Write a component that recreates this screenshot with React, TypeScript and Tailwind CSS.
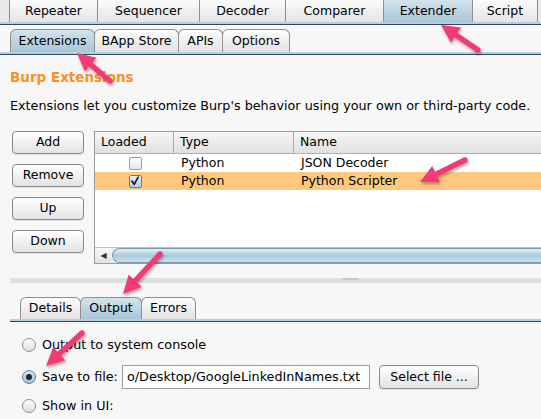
import React from "react";

function Arrow({ x1, y1, x2, y2 }: { x1: number; y1: number; x2: number; y2: number }) {
  const dx = x2 - x1;
  const dy = y2 - y1;
  const L = Math.hypot(dx, dy);
  const ux = dx / L;
  const uy = dy / L;
  const px = -uy;
  const py = ux;
  const hl = 18;
  const hw = 9;
  const sw = 2.7;
  const bx = x2 - ux * hl;
  const by = y2 - uy * hl;
  const pts = [
    [x1 + px * sw, y1 + py * sw],
    [bx + px * sw, by + py * sw],
    [bx + px * hw, by + py * hw],
    [x2, y2],
    [bx - px * hw, by - py * hw],
    [bx - px * sw, by - py * sw],
    [x1 - px * sw, y1 - py * sw],
  ]
    .map((p) => p.map((v) => v.toFixed(1)).join(","))
    .join(" ");
  return (
    <g filter="url(#shadow)">
      <polygon points={pts} fill="#f03a74" strokeLinejoin="round" />
      <circle cx={x1} cy={y1} r={sw} fill="#f03a74" />
    </g>
  );
}

function TopTab({ label, w, selected, last }: { label: string; w: string; selected?: boolean; last?: boolean }) {
  return (
    <div
      className={`${w} h-full flex items-center justify-center border-l border-[#8e8e8e] ${last ? "border-r" : ""} ${
        selected ? "bg-gradient-to-b from-[#d3e3ed] to-[#a8c6d8]" : "bg-gradient-to-b from-[#fbfbfb] to-[#e4e4e4]"
      }`}
    >
      {label}
    </div>
  );
}

function SubTab({ label, w, selected }: { label: string; w: string; selected?: boolean }) {
  return (
    <div
      className={`${w} h-full flex items-center justify-center border border-b-0 border-[#8e8e8e] rounded-t-[6px] -mr-px ${
        selected ? "bg-gradient-to-b from-[#d3e3ed] to-[#a8c6d8]" : "bg-gradient-to-b from-[#fdfdfd] to-[#e2e2e2]"
      }`}
    >
      {label}
    </div>
  );
}

function Btn({ label, className }: { label: string; className: string }) {
  return (
    <div
      className={`${className} flex items-center justify-center rounded-[4px] border border-[#8a8a8a] bg-gradient-to-b from-[#ffffff] to-[#e3e3e3] shadow-[0_1px_0_rgba(0,0,0,0.08)]`}
    >
      {label}
    </div>
  );
}

function Radio({ checked }: { checked?: boolean }) {
  return (
    <div
      className={`w-[14px] h-[14px] shrink-0 rounded-full border flex items-center justify-center ${
        checked
          ? "border-[#5f7f96] bg-gradient-to-b from-[#d6e6f0] to-[#9fc1d6]"
          : "border-[#8e8e8e] bg-gradient-to-b from-[#ffffff] to-[#dedede]"
      }`}
    >
      {checked && <div className="w-[6px] h-[6px] rounded-full bg-[#1b2630]" />}
    </div>
  );
}

function Check({ checked }: { checked?: boolean }) {
  return (
    <div
      className={`w-[13px] h-[13px] rounded-[2px] border flex items-center justify-center ${
        checked
          ? "border-[#5f7f96] bg-gradient-to-b from-[#e4eff6] to-[#b0cde0]"
          : "border-[#9a9a9a] bg-gradient-to-b from-[#ffffff] to-[#e6e6e6]"
      }`}
    >
      {checked && (
        <svg width="10" height="10" viewBox="0 0 10 10">
          <path d="M2 5.2 L4.2 8.3 L8.2 1.2" stroke="#111" strokeWidth="1.6" fill="none" strokeLinecap="round" />
        </svg>
      )}
    </div>
  );
}

export default function App() {
  return (
    <div className="relative w-[541px] h-[419px] overflow-hidden bg-[#f7f7f7] text-[12.5px] text-black font-['DejaVu_Sans',sans-serif]">
      {/* top tab bar */}
      <div className="flex h-[22px] pl-[9px] bg-[#e9e9e9]">
        <TopTab w="w-[88px]" label="Repeater" />
        <TopTab w="w-[102px]" label="Sequencer" />
        <TopTab w="w-[86px]" label="Decoder" />
        <TopTab w="w-[98px]" label="Comparer" />
        <TopTab w="w-[89px]" label="Extender" selected />
        <TopTab w="w-[66px]" label="Script" last />
      </div>
      <div className="h-[2px] bg-[#b6cfdf]" />
      <div className="h-px bg-[#33465a]" />

      {/* second tab bar */}
      <div className="flex h-[27px] pt-[4px] pl-[10px]">
        <SubTab w="w-[85px]" label="Extensions" selected />
        <SubTab w="w-[85px]" label="BApp Store" />
        <SubTab w="w-[45px]" label="APIs" />
        <SubTab w="w-[68px]" label="Options" />
      </div>
      <div className="h-[2px] bg-[#b6cfdf]" />
      <div className="h-px bg-[#33465a]" />

      <div className="pl-[10px]">
        <div className="mt-[14px] h-[16px] leading-[16px] text-[13.5px] font-bold text-[#f7921e]">Burp Extensions</div>
        <div className="mt-[13px] h-[16px] leading-[16px] whitespace-nowrap text-[12.75px]">
          Extensions let you customize Burp's behavior using your own or third-party code.
        </div>

        <div className="mt-[17px] flex">
          <div className="ml-[2px] w-[72px] flex flex-col gap-[10px]">
            <Btn label="Add" className="h-[23px]" />
            <Btn label="Remove" className="h-[23px]" />
            <Btn label="Up" className="h-[23px]" />
            <Btn label="Down" className="h-[23px]" />
          </div>

          <div className="ml-[10px] flex-1 h-[133px] border border-r-0 border-[#9a9a9a] bg-white flex flex-col">
            <div className="flex h-[22px] border-b border-[#b0b0b0] bg-gradient-to-b from-[#f7f7f7] to-[#e0e0e0]">
              <div className="w-[79px] pl-[6px] flex items-center border-r border-[#a8a8a8]">Loaded</div>
              <div className="w-[120px] pl-[6px] flex items-center border-r border-[#a8a8a8]">Type</div>
              <div className="flex-1 pl-[6px] flex items-center">Name</div>
            </div>
            <div className="flex h-[18px] items-center">
              <div className="w-[80px] flex justify-center">
                <Check />
              </div>
              <div className="w-[120px] pl-[6px]">Python</div>
              <div className="flex-1 pl-[6px]">JSON Decoder</div>
            </div>
            <div className="flex h-[18px] items-center bg-[#fec97c]">
              <div className="w-[80px] flex justify-center">
                <Check checked />
              </div>
              <div className="w-[120px] pl-[6px]">Python</div>
              <div className="flex-1 pl-[6px]">Python Scripter</div>
            </div>
            <div className="flex-1" />
            <div className="flex h-[16px] border-t border-[#c4c4c4] bg-[#efefef]">
              <div className="w-[17px] flex items-center justify-center text-[8px] text-[#333] bg-gradient-to-b from-[#f8f8f8] to-[#e2e2e2]">
                ◀
              </div>
              <div className="flex-1 rounded-l-[8px] border border-r-0 border-[#7f9aae] bg-gradient-to-b from-[#e2eef5] via-[#a9cbe0] to-[#cfe2ee]" />
            </div>
          </div>
        </div>

        {/* split divider */}
        <div className="mt-[14px] h-[5px] bg-[#dcdfe4] flex">
          <div className="ml-[332px] w-[17px] h-[2px] bg-[#c4c8cf] rounded-t-[2px]" />
        </div>

        {/* bottom tabs */}
        <div className="mt-[14px] flex h-[22px] pl-[10px]">
          <SubTab w="w-[61px]" label="Details" />
          <SubTab w="w-[62px]" label="Output" selected />
          <SubTab w="w-[55px]" label="Errors" />
        </div>
        <div className="h-[2px] bg-[#b6cfdf]" />
        <div className="h-px bg-[#33465a]" />

        <div className="mt-[13px] h-[20px] flex items-center pl-[12px] gap-[6px] text-[12.75px]">
          <Radio />
          <span>Output to system console</span>
        </div>
        <div className="mt-[10px] h-[24px] flex items-center pl-[12px] text-[12.75px]">
          <Radio checked />
          <span className="ml-[6px] w-[80px] shrink-0">Save to file:</span>
          <div className="w-[248px] shrink-0 h-[24px] border border-[#9c9c9c] bg-white flex items-center pl-[4px] whitespace-nowrap overflow-hidden">
            o/Desktop/GoogleLinkedInNames.txt
          </div>
          <Btn label="Select file ..." className="ml-[9px] w-[100px] h-[24px] shrink-0 text-[12.5px]" />
        </div>
        <div className="mt-[7px] h-[20px] flex items-center pl-[12px] gap-[6px] text-[12.75px]">
          <Radio />
          <span>Show in UI:</span>
        </div>
      </div>

      {/* annotation arrows */}
      <svg className="absolute inset-0 pointer-events-none" width="541" height="419">
        <defs>
          <filter id="shadow" x="-20%" y="-20%" width="140%" height="140%">
            <feDropShadow dx="1" dy="2" stdDeviation="1.5" floodColor="#000" floodOpacity="0.35" />
          </filter>
        </defs>
        <Arrow x1={478} y1={50} x2={441} y2={25} />
        <Arrow x1={110} y1={81} x2={77} y2={53} />
        <Arrow x1={465} y1={160} x2={420} y2={182} />
        <Arrow x1={160} y1={254} x2={123} y2={294} />
        <Arrow x1={82} y1={333} x2={46} y2={366} />
      </svg>
    </div>
  );
}
